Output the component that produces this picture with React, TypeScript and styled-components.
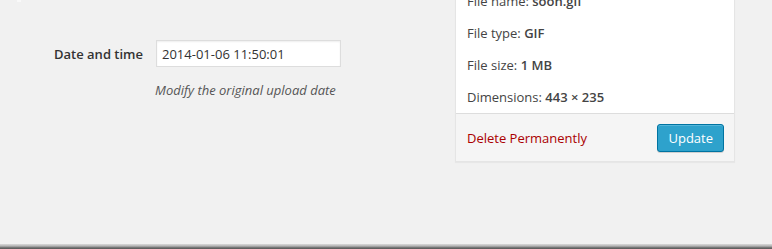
import styled, { createGlobalStyle } from "styled-components";

const GlobalStyle = createGlobalStyle`
  html, body {
    margin: 0;
    padding: 0;
    background: #f1f1f1;
  }
  body {
    font-family: "Open Sans", "Liberation Sans", sans-serif;
    font-size: 13px;
    color: #444;
  }
`;

const Screen = styled.div`
  height: 249px;
  display: flex;
  flex-direction: column;
  overflow: hidden;
`;

const Content = styled.div`
  flex: 1;
  display: flex;
  align-items: flex-start;
`;

const FormColumn = styled.div`
  width: 455px;
  display: flex;
  flex-direction: column;
`;

const Stub = styled.div`
  width: 4px;
  height: 2px;
  margin-left: 17px;
  background: #f9f9f9;
`;

const FieldRow = styled.div`
  display: grid;
  grid-template-columns: 102px auto;
  align-items: center;
  margin: 38px 0 0 54px;
`;

const Label = styled.label`
  font-weight: 600;
  font-size: 13px;
  color: #333;
`;

const DateInput = styled.input`
  box-sizing: border-box;
  width: 185px;
  height: 27px;
  padding: 0 5px;
  border: 1px solid #ddd;
  box-shadow: inset 0 1px 2px rgba(0, 0, 0, 0.07);
  background: #fff;
  font-family: "Open Sans", "Liberation Sans", sans-serif;
  font-size: 13px;
  color: #333;
  outline: none;
`;

const Hint = styled.p`
  margin: 14px 0 0 155px;
  font-style: italic;
  font-size: 13px;
  color: #555;
`;

const Panel = styled.div`
  width: 280px;
  margin-top: -16px;
  box-sizing: border-box;
  border: 1px solid #e5e5e5;
  box-shadow: 0 1px 1px rgba(0, 0, 0, 0.04);
  background: #fff;
`;

const Info = styled.div`
  padding: 0 11px;
`;

const InfoRow = styled.div`
  height: 32px;
  line-height: 32px;
  white-space: nowrap;
`;

const Strong = styled.strong`
  font-weight: 600;
`;

const Actions = styled.div`
  display: flex;
  align-items: center;
  justify-content: space-between;
  padding: 10px 10px 9px 11px;
  border-top: 1px solid #ddd;
  background: #f5f5f5;
`;

const DeleteLink = styled.a`
  color: #a00;
  text-decoration: none;
  font-size: 13px;
`;

const Button = styled.button`
  box-sizing: border-box;
  height: 28px;
  padding: 0 10px 1px;
  border: 1px solid #0074a2;
  border-radius: 3px;
  background: #2ea2cc;
  box-shadow: inset 0 1px 0 rgba(120, 200, 230, 0.5), 0 1px 0 rgba(0, 0, 0, 0.15);
  color: #fff;
  font-family: "Open Sans", "Liberation Sans", sans-serif;
  font-size: 13px;
`;

const EdgeShadow = styled.div`
  height: 5px;
  background: linear-gradient(#dadada, #b5b5b5 40%, #777 70%, #555);
`;

export default function App() {
  return (
    <>
      <GlobalStyle />
      <Screen>
        <Content>
          <FormColumn>
            <Stub />
            <FieldRow>
              <Label htmlFor="attachment-date">Date and time</Label>
              <DateInput id="attachment-date" defaultValue="2014-01-06 11:50:01" />
            </FieldRow>
            <Hint>Modify the original upload date</Hint>
          </FormColumn>
          <Panel>
            <Info>
              <InfoRow>
                File name: <Strong>soon.gif</Strong>
              </InfoRow>
              <InfoRow>
                File type: <Strong>GIF</Strong>
              </InfoRow>
              <InfoRow>
                File size: <Strong>1 MB</Strong>
              </InfoRow>
              <InfoRow>
                Dimensions: <Strong>443 × 235</Strong>
              </InfoRow>
            </Info>
            <Actions>
              <DeleteLink href="#">Delete Permanently</DeleteLink>
              <Button type="button">Update</Button>
            </Actions>
          </Panel>
        </Content>
        <EdgeShadow />
      </Screen>
    </>
  );
}
